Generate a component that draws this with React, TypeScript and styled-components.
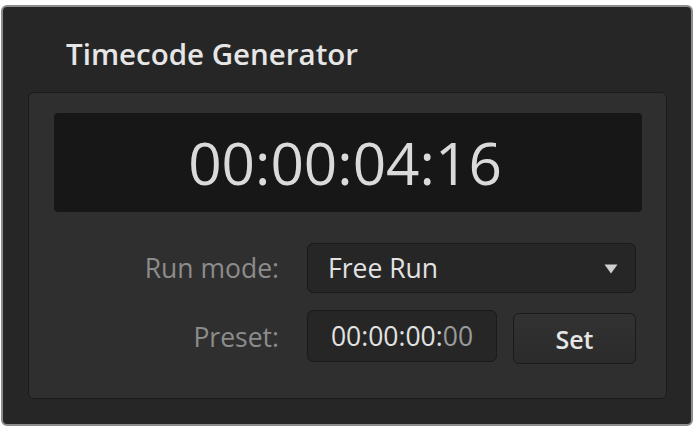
import * as React from 'react'
import styled, { createGlobalStyle } from 'styled-components';

const GlobalStyle = createGlobalStyle`
    html, body {
        margin: 0;
        padding: 0;
        background: #ffffff;
    }
    * {
        box-sizing: border-box;
    }
`

const App = () => {
    return (
        <>
            <GlobalStyle />
            <Window>
                <Title>Timecode Generator</Title>
                <Panel>
                    <Display>00:00:04:16</Display>
                    <Form>
                        <Label>Run mode:</Label>
                        <Select>
                            <span>Free Run</span>
                            <Caret viewBox="0 0 14 10">
                                <path d="M0.5 0.5 H13.5 L7 9.5 Z" fill="#cfcfcf" />
                            </Caret>
                        </Select>
                        <Label>Preset:</Label>
                        <Field>
                            00:00:00:<Dim>00</Dim>
                        </Field>
                        <SetBtn>Set</SetBtn>
                    </Form>
                </Panel>
            </Window>
        </>
    )
}

export default App;

const Window = styled.div`
    margin: 5px 0 0 1px;
    width: 692px;
    height: 421px;
    border: 2px solid #8d8d8d;
    border-radius: 6px;
    background: #262626;
    padding: 0 24px 25px 25px;
    display: flex;
    flex-direction: column;
    font-family: "Open Sans", "Noto Sans", sans-serif;
`

const Title = styled.div`
    height: 85px;
    padding: 27px 0 0 38px;
    font-size: 29.5px;
    font-weight: 600;
    color: #e6e6e6;
    line-height: 40px;
`

const Panel = styled.div`
    flex: 1;
    border: 1px solid #1b1b1b;
    border-radius: 6px;
    background: #2f2f2f;
    padding: 20px 24px 0 25px;
`

const Display = styled.div`
    height: 99px;
    border-radius: 4px;
    background: #171717;
    color: #dadada;
    font-size: 58.5px;
    font-weight: 380;
    text-align: center;
    line-height: 99px;
    padding-right: 6px;
`

const Form = styled.div`
    margin-top: 31px;
    padding-right: 6px;
    display: grid;
    grid-template-columns: 1fr 190px 123px;
    column-gap: 16px;
    row-gap: 17px;
`

const Label = styled.div`
    text-align: right;
    padding-right: 12px;
    font-size: 26.5px;
    color: #8c8c8c;
    align-self: center;
`

const Select = styled.div`
    grid-column: 2 / 4;
    height: 50px;
    border: 1px solid #1a1a1a;
    border-radius: 6px;
    background: #262626;
    display: flex;
    align-items: center;
    justify-content: space-between;
    padding: 0 17px 0 20px;
    font-size: 26.5px;
    color: #e2e2e2;
`

const Caret = styled.svg`
    width: 14px;
    height: 10px;
    margin-top: 2px;
`

const Field = styled.div`
    height: 52px;
    border: 1px solid #1a1a1a;
    border-radius: 6px;
    background: #262626;
    display: flex;
    align-items: center;
    justify-content: center;
    font-size: 26.5px;
    color: #e2e2e2;
`

const Dim = styled.span`
    color: #9a9a9a;
`

const SetBtn = styled.button`
    margin-top: 3px;
    height: 51px;
    border: 1px solid #1a1a1a;
    border-radius: 6px;
    background: linear-gradient(#323232, #2b2b2b);
    font-family: "Open Sans", "Noto Sans", sans-serif;
    font-size: 25px;
    font-weight: 600;
    color: #e6e6e6;
    padding: 0;
`
